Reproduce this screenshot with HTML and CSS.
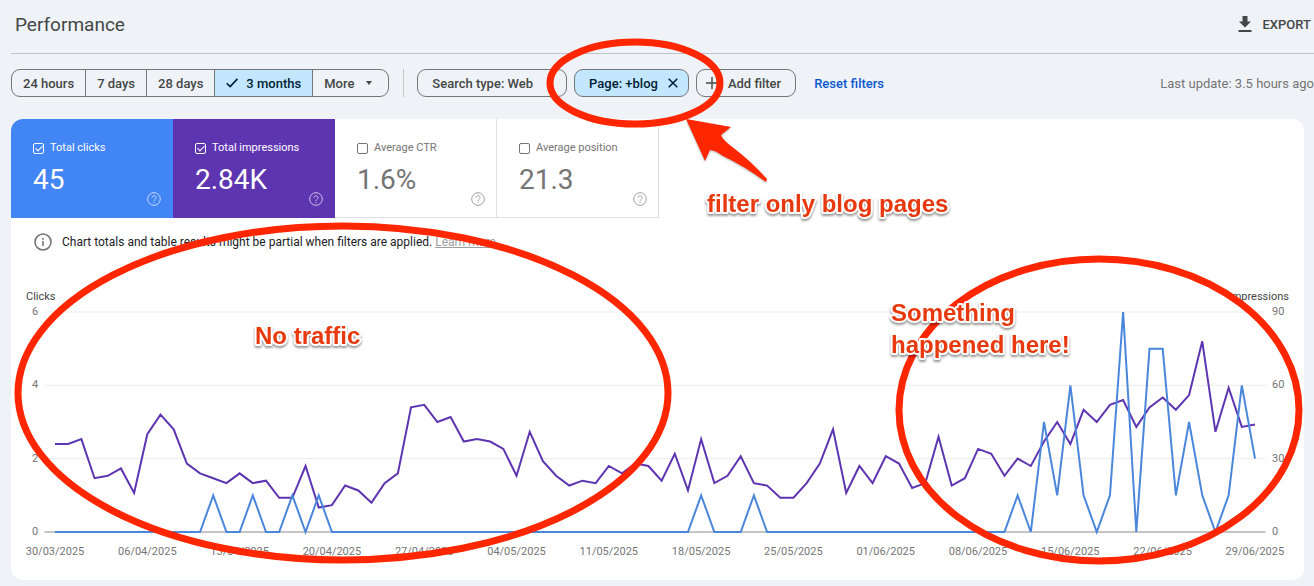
FILE: index.html
```html
<!DOCTYPE html>
<html lang="en">
<head>
    <meta charset="UTF-8">
    <meta name="viewport" content="width=device-width, initial-scale=1.0">
    <title>Performance</title>
    <link rel="stylesheet" href="styles.css">
</head>
<body>
    <div class="page">
        <header class="header">
            <h1>Performance</h1>
            <button class="export">
                <svg width="14" height="17" viewBox="0 0 14 17" fill="currentColor"><path d="M4.5 0h5v5.5H13L7 11.500 1 5.500h3.500zM0.500 14h13v2H.5z"/></svg>
                EXPORT
            </button>
        </header>

        <div class="filters">
            <div class="segments">
                <button>24 hours</button>
                <button>7 days</button>
                <button>28 days</button>
                <button class="selected">
                    <svg width="12" height="10" viewBox="0 0 12 10" fill="none" stroke="currentColor" stroke-width="1.600"><path d="M.7 5.200 4.200 8.600 11.400.9"/></svg>
                    3 months
                </button>
                <button class="more">
                    More
                    <svg width="6" height="4" viewBox="0 0 6 4" fill="currentColor"><path d="M0 0h6L3 4z"/></svg>
                </button>
            </div>
            <span class="divider"></span>
            <div class="chips">
                <button class="chip chip-type">Search type: Web</button>
                <button class="chip chip-page">
                    Page: +blog
                    <svg width="10" height="10" viewBox="0 0 10 10" stroke="currentColor" stroke-width="1.500"><path d="M.7.7l8.600 8.600M9.300.7L.7 9.300"/></svg>
                </button>
                <button class="chip chip-add">
                    <svg width="12" height="12" viewBox="0 0 12 12" stroke="currentColor" stroke-width="1.400"><path d="M6 0v12M0 6h12"/></svg>
                    Add filter
                </button>
            </div>
            <a href="#" class="reset">Reset filters</a>
            <span class="updated">Last update: 3.5 hours ago</span>
        </div>

        <main class="card">
            <div class="metrics">
                <div class="metric clicks">
                    <label><input type="checkbox" checked> Total clicks</label>
                    <div class="value">45</div>
                    <svg class="help" width="14" height="14" viewBox="0 0 14 14" fill="none" stroke="currentColor"><circle cx="7" cy="7" r="6.300"/><path d="M5 5.700a2 2 0 1 1 3.200 1.600C7.400 7.900 7 8.200 7 9M7 10v1"/></svg>
                </div>
                <div class="metric impressions">
                    <label><input type="checkbox" checked> Total impressions</label>
                    <div class="value">2.84K</div>
                    <svg class="help" width="14" height="14" viewBox="0 0 14 14" fill="none" stroke="currentColor"><circle cx="7" cy="7" r="6.300"/><path d="M5 5.700a2 2 0 1 1 3.200 1.600C7.400 7.900 7 8.200 7 9M7 10v1"/></svg>
                </div>
                <div class="metric">
                    <label><input type="checkbox"> Average CTR</label>
                    <div class="value">1.6%</div>
                    <svg class="help" width="14" height="14" viewBox="0 0 14 14" fill="none" stroke="currentColor"><circle cx="7" cy="7" r="6.300"/><path d="M5 5.700a2 2 0 1 1 3.200 1.600C7.400 7.900 7 8.200 7 9M7 10v1"/></svg>
                </div>
                <div class="metric">
                    <label><input type="checkbox"> Average position</label>
                    <div class="value">21.3</div>
                    <svg class="help" width="14" height="14" viewBox="0 0 14 14" fill="none" stroke="currentColor"><circle cx="7" cy="7" r="6.300"/><path d="M5 5.700a2 2 0 1 1 3.200 1.600C7.400 7.900 7 8.200 7 9M7 10v1"/></svg>
                </div>
            </div>

            <div class="notice">
                <svg width="18" height="18" viewBox="0 0 18 18" fill="none" stroke="currentColor" stroke-width="1.600"><circle cx="9" cy="9" r="8"/><path d="M9 8v5M9 5v1.700"/></svg>
                <p>Chart totals and table results might be partial when filters are applied. <a href="#">Learn more</a></p>
            </div>

            <div class="axis-titles">
                <span>Clicks</span>
                <span>Impressions</span>
            </div>
            <div class="chart">
                <div class="scale scale-left"><span>6</span><span>4</span><span>2</span><span>0</span></div>
                <div class="plot">
                    <svg viewBox="0 0 91 90" preserveAspectRatio="none">
                        <g class="grid-lines">
                            <path d="M-.8 0H91.800M-.8 30H91.800M-.8 60H91.800"/>
                            <path class="baseline" d="M-.8 90H91.800"/>
                        </g>
                        <polyline id="impressions-line" class="line-impressions"/>
                        <polyline id="clicks-line" class="line-clicks"/>
                    </svg>
                </div>
                <div class="scale scale-right"><span>90</span><span>60</span><span>30</span><span>0</span></div>
            </div>
            <div class="dates">
                <span>30/03/2025</span>
                <span>06/04/2025</span>
                <span>13/04/2025</span>
                <span>20/04/2025</span>
                <span>27/04/2025</span>
                <span>04/05/2025</span>
                <span>11/05/2025</span>
                <span>18/05/2025</span>
                <span>25/05/2025</span>
                <span>01/06/2025</span>
                <span>08/06/2025</span>
                <span>15/06/2025</span>
                <span>22/06/2025</span>
                <span>29/06/2025</span>
            </div>
        </main>

        <!-- Hand-drawn notes over the report -->
        <svg class="notes" viewBox="0 0 1314 586">
            <g class="rings">
                <ellipse cx="635" cy="83" rx="85" ry="41"/>
                <ellipse cx="343" cy="393" rx="325" ry="167"/>
                <ellipse cx="1099" cy="410" rx="200" ry="151"/>
            </g>
            <path class="arrow" d="M686 119l45 8-10 8q2 5 10 11 20 15 36 33l-1 3q-22-16-43-26-8-6-13-6l-5 11z"/>
            <text x="707" y="212">filter only blog pages</text>
            <text x="255" y="344">No traffic</text>
            <text x="891" y="321">Something</text>
            <text x="891" y="353">happened here!</text>
        </svg>
    </div>

    <script src="chart.js"></script>
</body>
</html>
```

FILE: styles.css
```css
:root {
    --page: #eff3f8;
    --text: #444746;
    --muted: #757575;
    --border: #747775;
    --selected: #c2e7ff;
    --clicks: #4285f4;
    --impressions: #5e35b1;
    --note: #ff2600;
}
* {
    box-sizing: border-box;
}
body {
    margin: 0;
    font-family: Roboto, "Liberation Sans", sans-serif;
    color: var(--text);
    background-color: var(--page);
    overflow-x: hidden;
}
button {
    font: inherit;
    color: inherit;
    background: none;
    border: 0;
    margin: 0;
    padding: 0;
    cursor: pointer;
}
.page {
    position: relative;
    overflow: hidden;
    padding: 0 0 6px 11px;
}
.header {
    display: flex;
    align-items: center;
    justify-content: space-between;
    height: 54px;
    padding: 0 3px 4px 4px;
    border-bottom: 1px solid #bcc3ca;
}
h1 {
    margin: 0;
    font-size: 19px;
    font-weight: 400;
}
.export {
    display: flex;
    align-items: center;
    gap: 11px;
    font-size: 13px;
    font-weight: 500;
}
.filters {
    display: flex;
    align-items: center;
    margin: 15px 0 22px;
    height: 28px;
    font-size: 13px;
    font-weight: 500;
    white-space: nowrap;
}
.segments {
    display: flex;
    height: 28px;
    border: 1px solid var(--border);
    border-radius: 9px;
    overflow: hidden;
}
.segments button {
    display: flex;
    align-items: center;
    gap: 8px;
    padding: 0 11px;
}
.segments button + button {
    border-left: 1px solid var(--border);
}
.segments .selected {
    background-color: var(--selected);
    color: #001d35;
}
.segments .more {
    gap: 12px;
    padding-right: 16px;
}
.divider {
    height: 28px;
    margin: 0 13px 0 14px;
    border-left: 1px solid #c4c7c5;
}
.chips {
    display: flex;
    gap: 7px;
}
.chip {
    display: flex;
    align-items: center;
    height: 28px;
    border: 1px solid var(--border);
    border-radius: 9px;
    gap: 10px;
    padding: 0 14px;
}
.chip-type {
    padding-right: 33px;
}
.chip-page {
    padding-right: 10px;
    background-color: var(--selected);
    color: #001d35;
}
.chip-add {
    padding-left: 9px;
}
.reset {
    margin-left: 18px;
    color: #0b57d0;
    text-decoration: none;
}
.updated {
    margin-left: auto;
    font-weight: 400;
    color: var(--muted);
}
.card {
    margin-right: 10px;
    padding-bottom: 20px;
    background-color: #fff;
    border-radius: 12px;
    overflow: hidden;
}
.metrics {
    display: flex;
}
.metric {
    position: relative;
    width: 162px;
    height: 99px;
    padding: 21px 0 0 22px;
    color: var(--muted);
    border: solid #e0e0e0;
    border-width: 0 1px 1px 0;
}
.metric.clicks {
    color: #fff;
    background-color: var(--clicks);
    border-color: var(--clicks);
}
.metric.impressions {
    color: #fff;
    background-color: var(--impressions);
    border-color: var(--impressions);
}
.metric label {
    display: flex;
    align-items: center;
    gap: 6px;
    font-size: 11px;
    line-height: 16px;
}
.metric input {
    appearance: none;
    position: relative;
    width: 11px;
    height: 11px;
    margin: 0;
    color: inherit;
    border: 1px solid currentColor;
    border-radius: 2px;
}
.metric input:checked::after {
    content: "";
    position: absolute;
    left: 3px;
    top: 0;
    width: 3px;
    height: 6px;
    border: solid currentColor;
    border-width: 0 1px 1px 0;
    transform: rotate(45deg);
}
.value {
    font-size: 28px;
    line-height: 32px;
    margin-top: 8px;
}
.help {
    position: absolute;
    right: 11px;
    bottom: 11px;
    opacity: 0.7;
}
.notice {
    display: flex;
    align-items: center;
    gap: 10px;
    padding: 15px 0 0 23px;
    color: #757575;
}
.notice p {
    margin: 0;
    font-size: 12px;
    line-height: 18px;
    color: #202124;
}
.notice a {
    color: #9e9e9e;
}
.axis-titles {
    display: flex;
    justify-content: space-between;
    padding: 38px 15px 0;
    font-size: 11px;
    line-height: 16px;
}
.chart {
    display: grid;
    grid-template-columns: 33px 1fr 38px;
    height: 220px;
    margin-top: 7px;
    color: var(--muted);
}
.scale {
    display: flex;
    flex-direction: column;
    justify-content: space-between;
    margin: -8px 0;
    font-size: 11px;
    line-height: 16px;
}
.scale-left {
    padding-left: 21px;
}
.scale-right {
    padding-left: 6px;
}
.plot {
    padding: 0 11px;
}
.plot svg {
    display: block;
    width: 100%;
    height: 220px;
    overflow: visible;
    fill: none;
}
.plot path,
.plot polyline {
    vector-effect: non-scaling-stroke;
}
.grid-lines {
    stroke: #ebebeb;
}
.baseline {
    stroke: #8a8a8a;
}
.line-impressions {
    stroke: var(--impressions);
    stroke-width: 2px;
}
.line-clicks {
    stroke: #4a86dc;
    stroke-width: 2px;
}
.dates {
    display: flex;
    justify-content: space-between;
    padding: 12px 49px 0 44px;
    font-size: 11px;
    line-height: 16px;
    color: var(--muted);
}
.dates span {
    display: flex;
    justify-content: center;
    width: 0;
}
.notes {
    position: absolute;
    top: 0;
    left: 0;
    width: 100%;
    pointer-events: none;
}
.rings {
    fill: none;
    stroke: var(--note);
    stroke-width: 7px;
}
.arrow {
    fill: var(--note);
    filter: drop-shadow(0 1px 1px rgba(0,0,0,0.3));
}
.notes text {
    font-family: "Liberation Sans", Arial, sans-serif;
    font-size: 24px;
    font-weight: 700;
    fill: #e8380d;
    stroke: #fff;
    stroke-width: 4px;
    stroke-linejoin: round;
    paint-order: stroke;
    filter: drop-shadow(0 2px 1px rgba(0,0,0,0.4));
}
```

FILE: chart.js
```js
// One value per day, 30/03/2025 to 29/06/2025
const impressions = [
    36, 36, 38, 22, 23, 26, 16, 40, 48, 42, 28, 24, 22, 20,
    24, 20, 21, 14, 14, 27, 10, 11, 19, 17, 12, 20, 24, 51,
    52, 45, 47, 37, 38, 37, 34, 23, 41, 29, 23, 19, 21, 20,
    27, 24, 28, 27, 21, 32, 17, 38, 20, 23, 31, 20, 19, 14,
    14, 20, 28, 42, 16, 27, 20, 31, 28, 18, 20, 39, 19, 22,
    34, 32, 23, 30, 27, 37, 45, 36, 50, 45, 52, 54, 43, 51,
    55, 50, 56, 78, 41, 59, 43, 44
];
const clicks = new Array(73).fill(0).concat([1, 0, 3, 1, 4, 1, 0, 1, 6, 0, 5, 5, 1, 3, 1, 0, 1, 4, 2]);
[12, 15, 18, 20, 49, 53].forEach(day => clicks[day] = 1);

// Plot is 90 units high, whatever the top of the scale is
function drawLine(id, values, max) {
    const points = values.map((value, day) => `${day},${90 - value * 90 / max}`);
    document.getElementById(id).setAttribute('points', points.join(' '));
}

drawLine('impressions-line', impressions, 90);
drawLine('clicks-line', clicks, 6);
```
